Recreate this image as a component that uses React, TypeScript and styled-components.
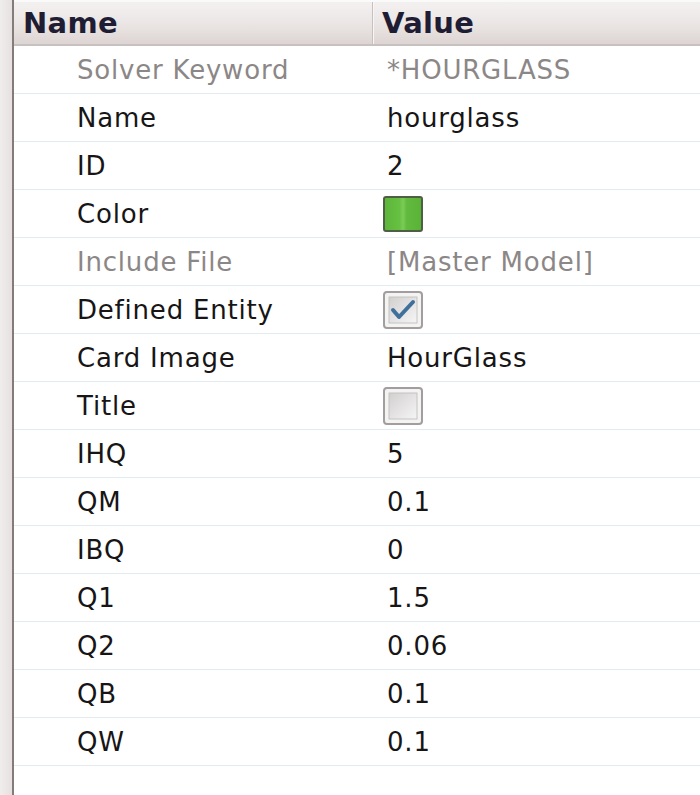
import React from 'react'
import styled, { createGlobalStyle } from 'styled-components'

const GlobalStyle = createGlobalStyle`
  html, body {
    margin: 0;
    padding: 0;
    background: #ffffff;
  }
  body {
    font-family: 'DejaVu Sans', 'Liberation Sans', sans-serif;
  }
`

const Page = styled.div`
  display: flex;
  width: 700px;
  height: 795px;
  overflow: hidden;
  background: #ffffff;
`

const Gutter = styled.div`
  width: 12px;
  flex-shrink: 0;
  background: linear-gradient(90deg, #f0eded, #e6e1e0);
  border-right: 2px solid #867b7b;
`

const Grid = styled.div`
  flex: 1;
  display: flex;
  flex-direction: column;
`

const Header = styled.div`
  display: grid;
  grid-template-columns: 358px 1fr;
  height: 42px;
  border-top: 2px solid #fbfafa;
  border-bottom: 2px solid #c8c1bf;
  background: linear-gradient(180deg, #f3f1f0 0%, #ebe6e5 50%, #ddd5d3 100%);
`

const HeaderCell = styled.div<{ $divider?: boolean; $pad: number }>`
  display: flex;
  align-items: center;
  padding-left: ${({ $pad }) => $pad}px;
  font-size: 29px;
  font-weight: 700;
  letter-spacing: 0.3px;
  color: #1f1d33;
  border-left: ${({ $divider }) => ($divider ? '1px solid #c7c0be' : 'none')};
  box-shadow: ${({ $divider }) => ($divider ? 'inset 1px 0 0 #f7f5f5' : 'none')};
`

const Row = styled.div`
  display: grid;
  grid-template-columns: 358px 1fr;
  height: 47px;
  border-bottom: 1px solid #e0ecf1;
`

const NameCell = styled.div<{ $muted?: boolean }>`
  display: flex;
  align-items: center;
  padding-left: 63px;
  font-size: 26px;
  letter-spacing: 0.8px;
  color: ${({ $muted }) => ($muted ? '#8c8787' : '#171515')};
  white-space: nowrap;
`

const ValueCell = styled.div<{ $muted?: boolean }>`
  display: flex;
  align-items: center;
  padding-left: 15px;
  font-size: 26px;
  letter-spacing: 0.8px;
  color: ${({ $muted }) => ($muted ? '#8c8787' : '#171515')};
  white-space: nowrap;
`

const Swatch = styled.div`
  width: 36px;
  height: 32px;
  margin-left: -4px;
  border: 2px solid #4f5f45;
  border-radius: 3px;
  background: linear-gradient(90deg, #5db63a 0%, #66c041 40%, #7ccc58 50%, #62bb3e 60%, #5ab237 100%);
`

const CheckBox = ({ checked }: { checked?: boolean }) => (
  <svg width="40" height="38" viewBox="0 0 40 38" style={{ marginLeft: -4 }}>
    <defs>
      <linearGradient id={checked ? 'cbg1' : 'cbg2'} x1="0" y1="0" x2="1" y2="1">
        <stop offset="0" stopColor="#d2cfcf" />
        <stop offset="1" stopColor="#f6f5f5" />
      </linearGradient>
    </defs>
    <rect x="1" y="1" width="38" height="36" rx="3" fill="#f4f3f3" stroke="#a39d9d" strokeWidth="2" />
    <rect x="6" y="6" width="28" height="26" fill={`url(#${checked ? 'cbg1' : 'cbg2'})`} stroke="#c6c2c2" strokeWidth="1" />
    {checked && (
      <path d="M10 19 L16 26 L30 11" fill="none" stroke="#3f6f9b" strokeWidth="4" strokeLinecap="round" strokeLinejoin="round" />
    )}
  </svg>
)

type Prop = {
  name: string
  value?: string
  muted?: boolean
  kind?: 'text' | 'color' | 'check' | 'uncheck'
}

const props: Prop[] = [
  { name: 'Solver Keyword', value: '*HOURGLASS', muted: true },
  { name: 'Name', value: 'hourglass' },
  { name: 'ID', value: '2' },
  { name: 'Color', kind: 'color' },
  { name: 'Include File', value: '[Master Model]', muted: true },
  { name: 'Defined Entity', kind: 'check' },
  { name: 'Card Image', value: 'HourGlass' },
  { name: 'Title', kind: 'uncheck' },
  { name: 'IHQ', value: '5' },
  { name: 'QM', value: '0.1' },
  { name: 'IBQ', value: '0' },
  { name: 'Q1', value: '1.5' },
  { name: 'Q2', value: '0.06' },
  { name: 'QB', value: '0.1' },
  { name: 'QW', value: '0.1' },
]

const renderValue = (p: Prop) => {
  if (p.kind === 'color') return <Swatch />
  if (p.kind === 'check') return <CheckBox checked />
  if (p.kind === 'uncheck') return <CheckBox />
  return p.value
}

const App = () => (
  <>
    <GlobalStyle />
    <Page>
      <Gutter />
      <Grid>
        <Header>
          <HeaderCell $pad={9}>Name</HeaderCell>
          <HeaderCell $pad={9} $divider>Value</HeaderCell>
        </Header>
        {props.map((p) => (
          <Row key={p.name}>
            <NameCell $muted={p.muted}>{p.name}</NameCell>
            <ValueCell $muted={p.muted}>{renderValue(p)}</ValueCell>
          </Row>
        ))}
      </Grid>
    </Page>
  </>
)

export default App
